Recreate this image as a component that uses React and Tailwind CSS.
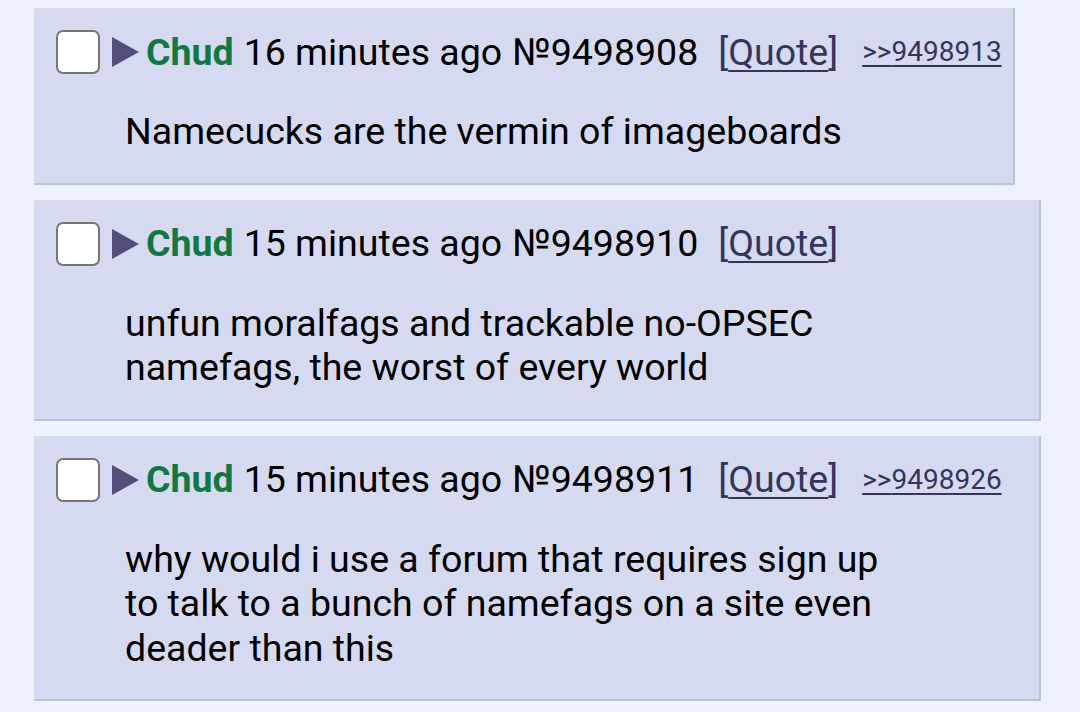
import React from "react";

const posts = [
  {
    time: "16 minutes ago",
    no: "9498908",
    reply: "9498913",
    width: "w-[981px]",
    lines: ["Namecucks are the vermin of imageboards"],
  },
  {
    time: "15 minutes ago",
    no: "9498910",
    width: "w-[1007px]",
    lines: ["unfun moralfags and trackable no-OPSEC", "namefags, the worst of every world"],
  },
  {
    time: "15 minutes ago",
    no: "9498911",
    reply: "9498926",
    width: "w-[1007px]",
    lines: [
      "why would i use a forum that requires sign up",
      "to talk to a bunch of namefags on a site even",
      "deader than this",
    ],
  },
];

function Post({ post }) {
  return (
    <div className={`${post.width} bg-[#d6daf0] border-r-2 border-b-2 border-[#b7c5d9] pt-[22px] pb-[29px]`}>
      <div className="flex items-center pl-[22px] h-[44px]">
        <div className="w-[44px] h-[44px] rounded-[7px] border-2 border-[#767676] bg-white shrink-0" />
        <svg width="29" height="32" viewBox="0 0 29 32" className="ml-[11px] shrink-0">
          <polygon points="1,1 28,16 1,31" fill="#50507a" />
        </svg>
        <span className="ml-[6px] font-bold text-[#117743]">Chud</span>
        <span className="ml-[10px] text-black">{post.time}</span>
        <span className="ml-[10px] text-black">№{post.no}</span>
        <span className="ml-[20px] text-[#34345c]">
          [<span className="underline decoration-2 underline-offset-[5px]">Quote</span>]
        </span>
        {post.reply && (
          <span className="ml-[24px] text-[28px] text-[#34345c] underline decoration-2 underline-offset-[4px]">
            &gt;&gt;{post.reply}
          </span>
        )}
      </div>
      <div className="mt-[35px] ml-[91px] leading-[44.5px] text-black">
        {post.lines.map((l, i) => (
          <div key={i}>{l}</div>
        ))}
      </div>
    </div>
  );
}

export default function App() {
  return (
    <div
      className="w-[1080px] h-[712px] overflow-hidden bg-[#eef2ff] pt-[8px] pl-[34px] flex flex-col gap-[15px] text-[37.5px]"
      style={{ fontFamily: "Roboto, 'Noto Sans', sans-serif" }}
    >
      {posts.map((p, i) => (
        <Post key={i} post={p} />
      ))}
    </div>
  );
}
